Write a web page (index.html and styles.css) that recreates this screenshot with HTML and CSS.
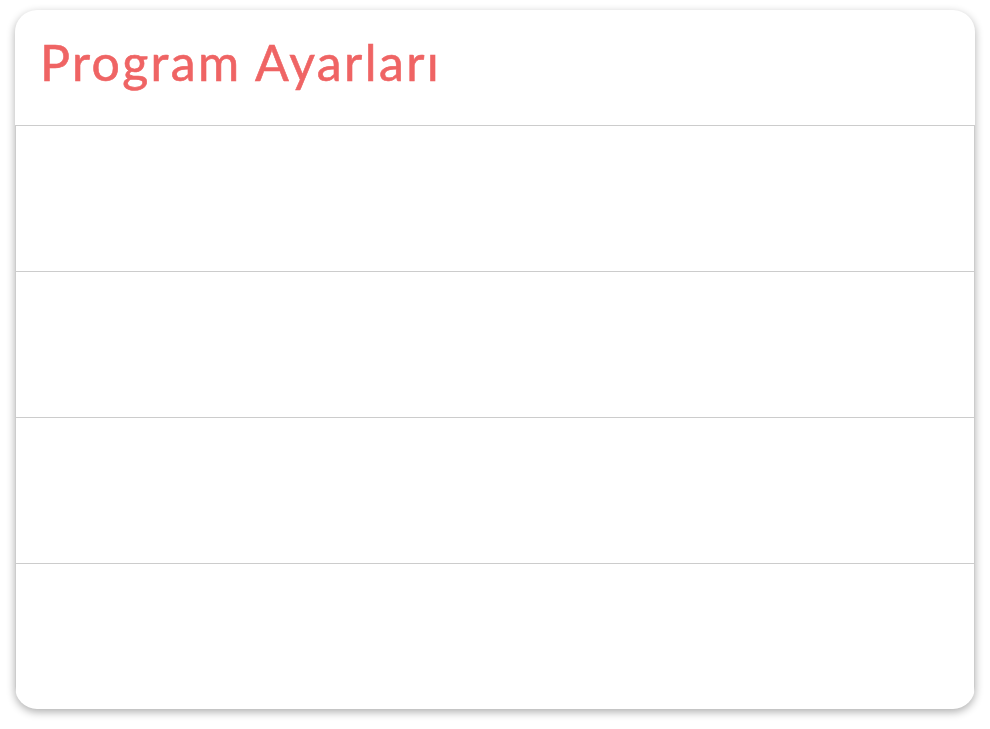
FILE: index.html
```html
<!DOCTYPE html>
<html lang="tr">
<head>
<meta charset="utf-8">
<title>Program Ayarları</title>
<link rel="stylesheet" href="styles.css">
</head>
<body>
<div class="card">
  <div class="card-header">
    <h1 class="title">Program Ayarları</h1>
  </div>
  <ul class="settings">
    <li class="setting"></li>
    <li class="setting"></li>
    <li class="setting"></li>
    <li class="setting"></li>
  </ul>
</div>
</body>
</html>
```

FILE: styles.css
```css
html, body {
  margin: 0;
  padding: 0;
  background: #ffffff;
}
body {
  padding: 10px 15px 20px 15px;
  font-family: "Lato", "Noto Sans", sans-serif;
}
.card {
  width: 960px;
  background: #ffffff;
  border-radius: 22px;
  overflow: hidden;
  box-shadow: 0 3px 8px rgba(0, 0, 0, 0.32);
}
.card-header {
  height: 115px;
  display: flex;
  align-items: center;
  padding-left: 25px;
  box-sizing: border-box;
}
.title {
  margin: 0;
  margin-top: -12px;
  font-size: 50px;
  font-weight: 400;
  color: #ef6464;
  letter-spacing: 2.4px;
  -webkit-text-stroke: 0.6px #ef6464;
}
.settings {
  list-style: none;
  margin: 0;
  padding: 0;
}
.setting {
  height: 145px;
  border: 1px solid #cccccc;
  border-bottom: none;
}
```
